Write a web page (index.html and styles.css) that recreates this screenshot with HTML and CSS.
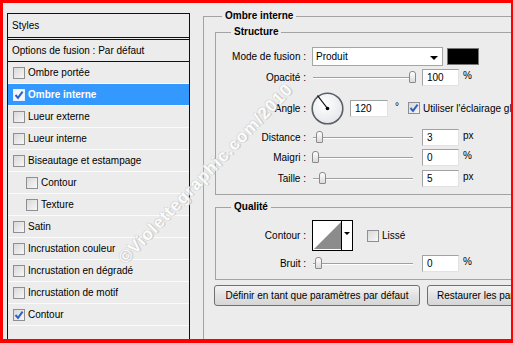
FILE: index.html
```html
<!DOCTYPE html>
<html lang="fr">
    <head>
        <meta charset="UTF-8" />
        <title>Style de calque</title>
        <link rel="stylesheet" href="styles.css">
    </head>

    <body>
        <div class="dialog">
            <div class="stylesPanel">
                <div class="panelTitle">Styles</div>
                <div class="panelOptions">Options de fusion : Par défaut</div>
                <div class="item"><span class="box"></span>Ombre portée</div>
                <div class="item selected">
                    <span class="box">
                        <svg width="10" height="10" viewBox="0 0 10 10"><path d="M1.5 5 L4 7.8 L8.6 1.6" fill="none" stroke="#3160c8" stroke-width="2"/></svg>
                    </span>Ombre interne
                </div>
                <div class="item"><span class="box"></span>Lueur externe</div>
                <div class="item"><span class="box"></span>Lueur interne</div>
                <div class="item"><span class="box"></span>Biseautage et estampage</div>
                <div class="item sub"><span class="box"></span>Contour</div>
                <div class="item sub"><span class="box"></span>Texture</div>
                <div class="item"><span class="box"></span>Satin</div>
                <div class="item"><span class="box"></span>Incrustation couleur</div>
                <div class="item"><span class="box"></span>Incrustation en dégradé</div>
                <div class="item"><span class="box"></span>Incrustation de motif</div>
                <div class="item">
                    <span class="box">
                        <svg width="10" height="10" viewBox="0 0 10 10"><path d="M1.5 5 L4 7.8 L8.6 1.6" fill="none" stroke="#3160c8" stroke-width="2"/></svg>
                    </span>Contour
                </div>
            </div>

            <div class="settings">
                <fieldset class="group outer">
                    <legend>Ombre interne</legend>

                    <fieldset class="group structure">
                        <legend>Structure</legend>
                        <div class="row rowMode">
                            <span class="label">Mode de fusion :</span>
                            <div class="select">Produit<span class="arrow"></span></div>
                            <span class="swatch"></span>
                        </div>
                        <div class="row rowOpacity">
                            <span class="label">Opacité :</span>
                            <div class="slider"><span class="thumb" style="left: 97px"></span></div>
                            <span class="field">100</span>
                            <span class="unit">%</span>
                        </div>
                        <div class="row rowAngle">
                            <span class="label">Angle :</span>
                            <svg class="dial" width="33" height="33" viewBox="0 0 33 33">
                                <defs>
                                    <radialGradient id="dialFill" cx="0.4" cy="0.35" r="0.7">
                                        <stop offset="0" stop-color="#ffffff"/>
                                        <stop offset="1" stop-color="#e4e6ea"/>
                                    </radialGradient>
                                </defs>
                                <circle cx="16.5" cy="16.5" r="15.3" fill="url(#dialFill)" stroke="#5b5f66" stroke-width="1.6"/>
                                <line x1="16.5" y1="16.5" x2="6.5" y2="3.5" stroke="#000" stroke-width="1.2"/>
                                <circle cx="16.5" cy="16.5" r="1.8" fill="#000"/>
                            </svg>
                            <span class="field angleField">120</span>
                            <span class="degree">°</span>
                            <span class="box globalBox">
                                <svg width="10" height="10" viewBox="0 0 10 10"><path d="M1.5 5 L4 7.8 L8.6 1.6" fill="none" stroke="#3160c8" stroke-width="2"/></svg>
                            </span>
                            <span class="globalText">Utiliser l'éclairage global</span>
                        </div>
                        <div class="row rowDistance">
                            <span class="label">Distance :</span>
                            <div class="slider"><span class="thumb" style="left: 4px"></span></div>
                            <span class="field">3</span>
                            <span class="unit">px</span>
                        </div>
                        <div class="row rowChoke">
                            <span class="label">Maigri :</span>
                            <div class="slider"><span class="thumb" style="left: 0px"></span></div>
                            <span class="field">0</span>
                            <span class="unit">%</span>
                        </div>
                        <div class="row rowSize">
                            <span class="label">Taille :</span>
                            <div class="slider"><span class="thumb" style="left: 7px"></span></div>
                            <span class="field">5</span>
                            <span class="unit">px</span>
                        </div>
                    </fieldset>

                    <fieldset class="group quality">
                        <legend>Qualité</legend>
                        <div class="row rowContour">
                            <span class="label">Contour :</span>
                            <svg class="contour" width="41" height="31" viewBox="0 0 41 31">
                                <rect x="0.5" y="0.5" width="40" height="30" fill="#fff" stroke="#000"/>
                                <polygon points="2,29 29,2 29,29" fill="#8c8c8c"/>
                                <line x1="29.5" y1="1" x2="29.5" y2="30" stroke="#000"/>
                                <polygon points="32,12 38,12 35,15" fill="#000"/>
                            </svg>
                            <span class="box smoothBox"></span>
                            <span class="smoothText">Lissé</span>
                        </div>
                        <div class="row rowNoise">
                            <span class="label">Bruit :</span>
                            <div class="slider"><span class="thumb" style="left: 3px"></span></div>
                            <span class="field">0</span>
                            <span class="unit">%</span>
                        </div>
                    </fieldset>

                    <div class="buttons">
                        <button class="btn btnDefault">Définir en tant que paramètres par défaut</button>
                        <button class="btn btnRestore">Restaurer les paramètres par défaut</button>
                    </div>
                </fieldset>
            </div>

            <div class="watermark">©Violettegraphic.com/2010</div>
        </div>
    </body>
</html>
```

FILE: styles.css
```css
body {
    margin: 0;
    font-family: "Liberation Sans", Arial, sans-serif;
    font-size: 10px;
    color: #000;
}
.dialog {
    position: relative;
    display: flex;
    width: 513px;
    height: 343px;
    box-sizing: border-box;
    border-style: solid;
    border-color: #ff0000;
    border-width: 3px 2px 4px 3px;
    background-color: #ececec;
    overflow: hidden;
}

/* left list of effects */
.stylesPanel {
    flex: none;
    width: 183px;
    height: 340px;
    box-sizing: border-box;
    margin: 10px 0 0 4px;
    border: 1px solid #111;
    border-bottom: none;
}
.panelTitle {
    height: 23px;
    line-height: 23px;
    padding-left: 4px;
    border-bottom: 3px double #111;
}
.panelOptions {
    height: 21px;
    line-height: 21px;
    padding-left: 4px;
    border-bottom: 1px solid #111;
}
.item {
    display: flex;
    align-items: center;
    height: 21px;
    padding-left: 5px;
    border-bottom: 1px solid #fbfbfb;
}
.item.sub {
    padding-left: 18px;
}
.item.selected {
    background-color: #3399ff;
    color: #fff;
    font-weight: bold;
}
.box {
    flex: none;
    display: flex;
    align-items: center;
    justify-content: center;
    width: 12px;
    height: 12px;
    box-sizing: border-box;
    margin-right: 3px;
    border: 1px solid #8d8f91;
    background: linear-gradient(135deg, #d9d9d9, #f7f7f7);
}
.item.selected .box {
    border-color: #e8eefc;
    background: #f4f6fb;
}

/* right settings */
.settings {
    flex: none;
    width: 340px;
    margin-left: 13px;
}
.group {
    margin: 0;
    min-width: 0;
    border: 1px solid #a3a3a3;
}
.group legend {
    padding: 0 3px;
    line-height: 12px;
    font-weight: bold;
}
.outer {
    height: 400px;
    margin-top: 7px;
    padding: 4px 0 0 11px;
}
.outer > legend {
    margin-left: 7px;
}
.structure,
.quality {
    padding: 0;
}
.structure > legend,
.quality > legend {
    margin-left: 15px;
}
.structure {
    padding-top: 9px;
    padding-bottom: 7px;
}
.quality {
    margin-top: 6px;
    padding-top: 7px;
    padding-bottom: 7px;
}
.row {
    display: flex;
    align-items: center;
    height: 18px;
}
.label {
    flex: none;
    width: 90px;
    margin-right: 6px;
    text-align: right;
}
.rowMode {
    height: 19px;
}
.rowOpacity {
    margin-top: 2px;
}
.rowAngle {
    height: 32px;
    margin-top: 6px;
}
.rowDistance {
    margin-top: 4px;
}
.rowChoke {
    margin-top: 2px;
}
.rowSize {
    margin-top: 3px;
}
.rowContour {
    height: 31px;
}
.rowNoise {
    margin-top: 3px;
}

.select {
    position: relative;
    width: 131px;
    height: 19px;
    line-height: 17px;
    box-sizing: border-box;
    padding-left: 3px;
    border: 1px solid #a5a5a5;
    background-color: #fff;
}
.arrow {
    position: absolute;
    right: 4px;
    top: 8px;
    border-left: 4px solid transparent;
    border-right: 4px solid transparent;
    border-top: 4px solid #000;
}
.swatch {
    width: 30px;
    height: 15px;
    margin-left: 4px;
    border: 1px solid #777;
    background-color: #000;
}
.slider {
    position: relative;
    flex: none;
    width: 101px;
    height: 14px;
}
.slider::before {
    content: "";
    position: absolute;
    left: 1px;
    right: 0;
    top: 7px;
    height: 1px;
    background-color: #a0a0a0;
    border-bottom: 1px solid #fff;
}
.thumb {
    position: absolute;
    top: 1px;
    width: 5px;
    height: 10px;
    border: 1px solid #8a8a8a;
    border-radius: 3px 3px 1px 1px;
    background: linear-gradient(#ffffff, #dadada);
}
.field {
    flex: none;
    width: 37px;
    height: 17px;
    line-height: 16px;
    box-sizing: border-box;
    margin-left: 9px;
    padding-left: 4px;
    border: 1px solid;
    border-color: #a2a2a2 #e2e2e2 #e2e2e2 #a2a2a2;
    background-color: #fff;
}
.unit {
    margin-left: 4px;
    margin-bottom: 4px;
}
.dial {
    flex: none;
    margin-left: -1px;
}
.angleField {
    width: 38px;
    margin-left: 6px;
}
.degree {
    margin-left: 7px;
    margin-bottom: 4px;
}
.globalBox {
    margin-left: 9px;
}
.globalText {
    white-space: nowrap;
}
.contour {
    flex: none;
}
.smoothBox {
    margin-left: 14px;
}

.buttons {
    display: flex;
    gap: 7px;
    margin-top: 5px;
    margin-left: -1px;
}
.btn {
    flex: none;
    height: 21px;
    padding: 0;
    border: 1px solid #707070;
    border-radius: 3px;
    background: linear-gradient(#f4f4f4, #e2e2e2 50%, #d6d6d6);
    font-family: "Liberation Sans", Arial, sans-serif;
    font-size: 10px;
    color: #000;
    white-space: nowrap;
}
.btnDefault {
    width: 206px;
}
.btnRestore {
    width: 170px;
    padding-left: 9px;
    text-align: left;
}

.watermark {
    position: absolute;
    left: 82px;
    top: 161px;
    transform: rotate(-46deg);
    font-size: 17px;
    font-weight: bold;
    letter-spacing: 1px;
    color: #ffffff;
    white-space: nowrap;
    text-shadow: 1px 1px 0 #c4c4c4, -1px 0 0 #d6d6d6, 0 -1px 0 #d6d6d6;
    opacity: 0.8;
}
```
